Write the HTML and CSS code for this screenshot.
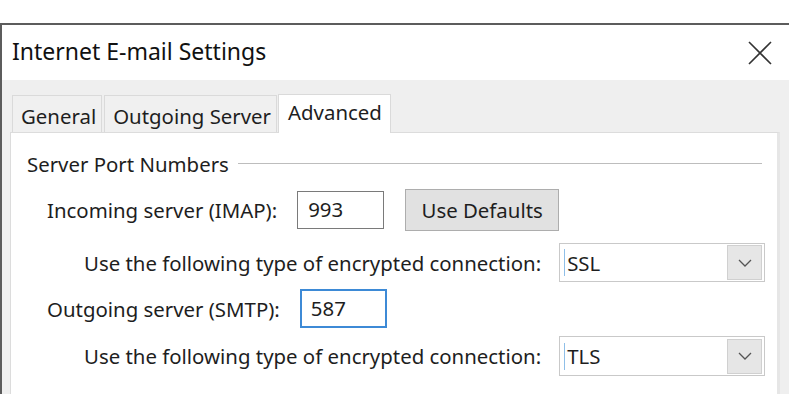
FILE: index.html
```html
<!DOCTYPE html>
<html lang="en">
<head>
    <meta charset="UTF-8">
    <title>Internet E-mail Settings</title>
    <link rel="stylesheet" href="styles.css">
</head>
<body>
    <div class="window">
        <div class="titlebar">
            <span class="title">Internet E-mail Settings</span>
            <svg class="close" width="24" height="24" viewBox="0 0 24 24">
                <path d="M1 1 L23 23 M23 1 L1 23" stroke="#333" stroke-width="1.6" fill="none"/>
            </svg>
        </div>
        <div class="client">
            <div class="tabs">
                <div class="tab">General</div>
                <div class="tab">Outgoing Server</div>
                <div class="tab active">Advanced</div>
            </div>
            <div class="panel">
                <div class="group-head">
                    <span>Server Port Numbers</span>
                    <div class="rule"></div>
                </div>

                <div class="row first">
                    <label>Incoming server (IMAP):</label>
                    <div class="textbox">993</div>
                    <button class="btn">Use Defaults</button>
                </div>
                <div class="row sub">
                    <label>Use the following type of encrypted connection:</label>
                    <div class="combo">
                        <span class="caret"></span>
                        <span class="value">SSL</span>
                        <span class="drop">
                            <svg width="14" height="8" viewBox="0 0 14 8"><path d="M1 1 L7 7 L13 1" stroke="#555" stroke-width="1.3" fill="none"/></svg>
                        </span>
                    </div>
                </div>
                <div class="row">
                    <label>Outgoing server (SMTP):</label>
                    <div class="textbox focused">587</div>
                </div>
                <div class="row sub last">
                    <label>Use the following type of encrypted connection:</label>
                    <div class="combo">
                        <span class="caret"></span>
                        <span class="value">TLS</span>
                        <span class="drop">
                            <svg width="14" height="8" viewBox="0 0 14 8"><path d="M1 1 L7 7 L13 1" stroke="#555" stroke-width="1.3" fill="none"/></svg>
                        </span>
                    </div>
                </div>
            </div>
        </div>
    </div>
</body>
</html>
```

FILE: styles.css
```css
body {
    margin: 0;
    background: #fff;
    font-family: "Noto Sans", "Open Sans", sans-serif;
    font-size: 20.4px;
    color: #1e1e1e;
    overflow: hidden;
}

.window {
    margin-top: 23px;
    border-top: 2px solid #5c5c5c;
    border-left: 2px solid #5c5c5c;
    height: 369px;
    overflow: hidden;
}

.titlebar {
    height: 55px;
    display: flex;
    align-items: center;
    justify-content: space-between;
    padding: 0 17px 0 10px;
    background: #fff;
}
.title {
    font-size: 23px;
    color: #111;
    margin-top: -3px;
}

.client {
    background: #efefef;
    height: 314px;
    padding: 14px 9px 0 8px;
}

.tabs {
    display: flex;
    align-items: flex-end;
    padding-left: 2px;
}
.tab {
    height: 37px;
    padding: 3px 5px 0 8px;
    line-height: 34px;
    border: 1px solid #dadada;
    border-bottom: none;
    background: #f0f0f0;
    margin-right: 2px;
    box-sizing: border-box;
    white-space: nowrap;
}
.tab.active {
    height: 39px;
    line-height: 34px;
    background: #fff;
    margin-bottom: -1px;
    padding: 0 8px 0 9px;
    margin-left: -1px;
}

.panel {
    background: #fff;
    border: 1px solid #dcdcdc;
    border-right: 3px solid #e6e6e6;
    height: 300px;
    padding: 0 15px 0 16px;
}

.group-head {
    display: flex;
    align-items: center;
    margin-top: 17px;
    height: 28px;
    white-space: nowrap;
}
.rule {
    flex: 1;
    height: 1px;
    background: #bdbdbd;
    margin-left: 9px;
    margin-top: -1px;
}

.row {
    display: flex;
    align-items: center;
    gap: 20px;
    padding-left: 20px;
    margin-top: 7px;
}
.row label {
    white-space: nowrap;
}
.row.first {
    margin-top: 11px;
}
.row.sub {
    padding-left: 57px;
    gap: 18px;
    margin-top: 12px;
}
.row.sub.last {
    margin-top: 8px;
}

.textbox {
    width: 87px;
    height: 38px;
    flex-shrink: 0;
    box-sizing: border-box;
    border: 1px solid #7a7a7a;
    padding-left: 10px;
    line-height: 35px;
    background: #fff;
}
.textbox.focused {
    border: 2px solid #3d8ad6;
    padding-left: 9px;
    line-height: 34px;
    height: 39px;
}

.btn {
    font: inherit;
    color: inherit;
    width: 154px;
    height: 42px;
    flex-shrink: 0;
    background: #e1e1e1;
    border: 1px solid #adadad;
    margin-left: 1px;
    padding: 0;
}

.combo {
    width: 206px;
    height: 39px;
    flex-shrink: 0;
    box-sizing: border-box;
    border: 1px solid #c9c9c9;
    display: flex;
    align-items: center;
    background: #fff;
}
.sub.last .combo {
    height: 40px;
}
.caret {
    width: 1px;
    height: 27px;
    background: #8fbfe8;
    margin-left: 4px;
}
.value {
    flex: 1;
    padding-left: 2px;
}
.drop {
    width: 35px;
    height: 35px;
    margin-right: 2px;
    background: #e6e6e6;
    border: 1px solid #d0d0d0;
    box-sizing: border-box;
    display: flex;
    align-items: center;
    justify-content: center;
}
```
